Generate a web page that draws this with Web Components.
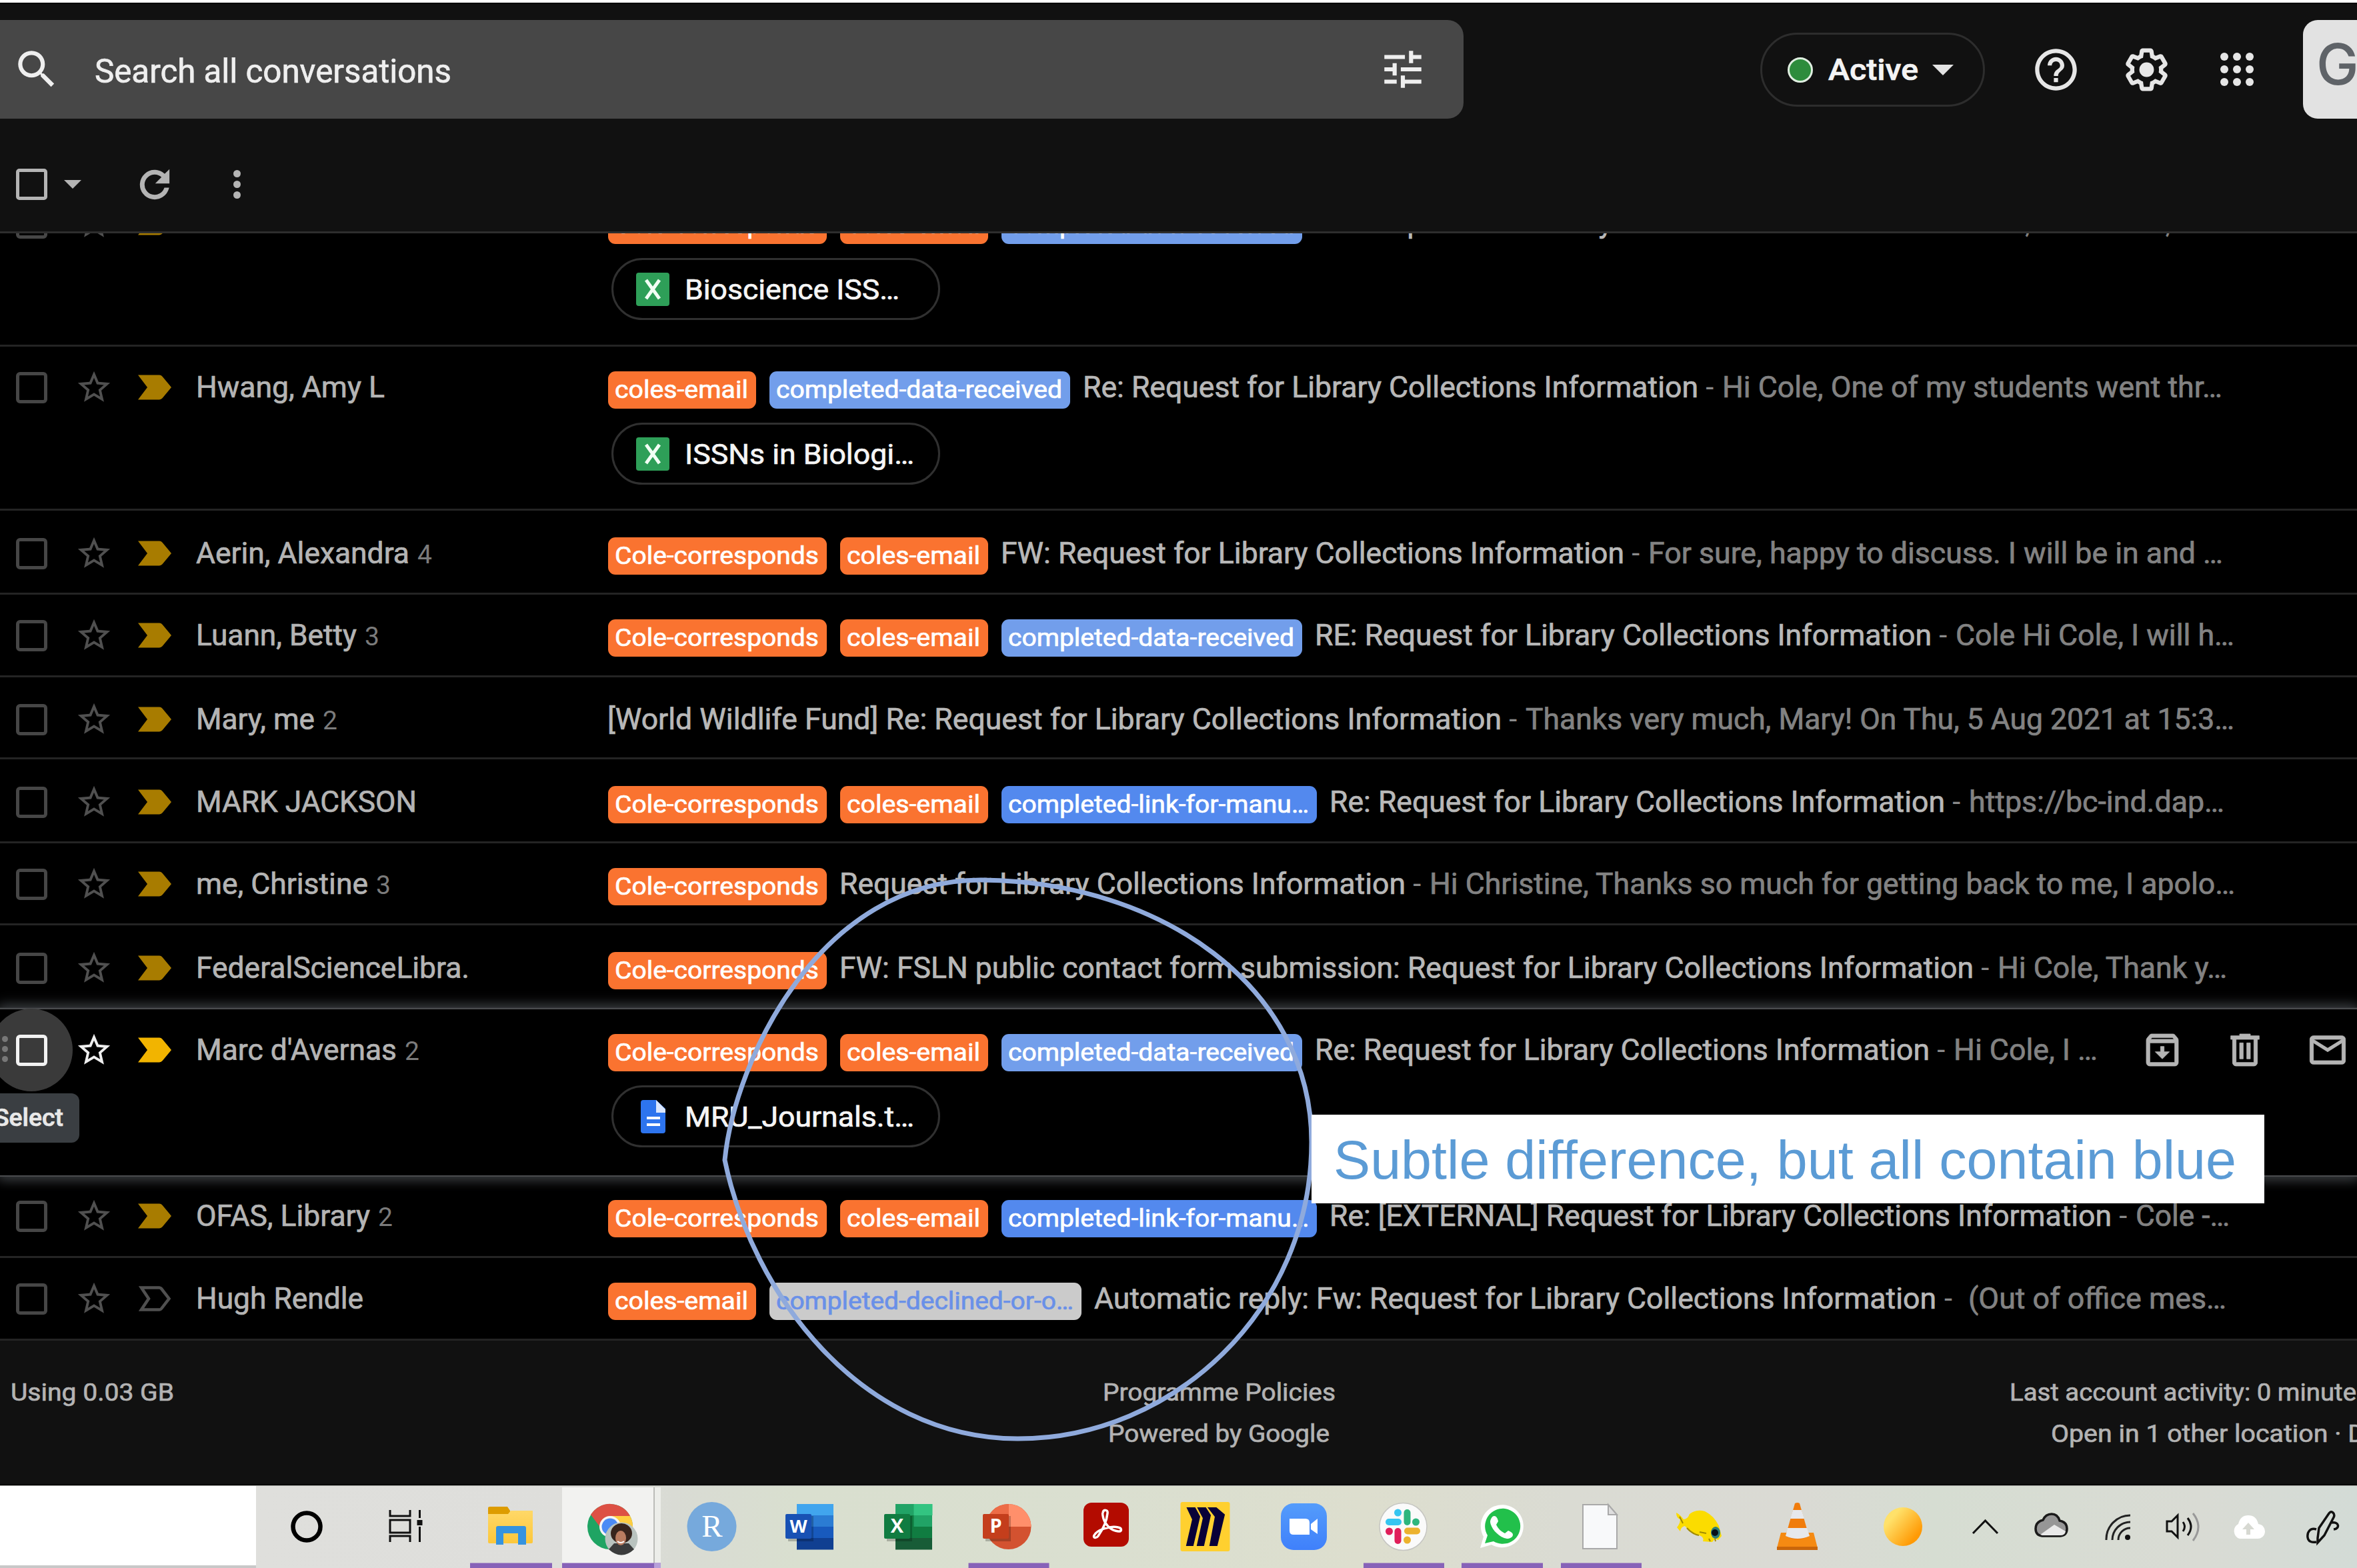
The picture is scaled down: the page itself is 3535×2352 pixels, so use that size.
<!DOCTYPE html>
<html lang="en">
<head>
<meta charset="utf-8">
<title>Mail</title>
<style>
html,body{margin:0;padding:0;background:#111;overflow:hidden}
body{width:3535px;height:2352px;font-family:Roboto,"Liberation Sans",sans-serif}
</style>
</head>
<body>
<mail-app></mail-app>
<script>
const define=(name,cls)=>customElements.define(name,cls);
const root=(el,html)=>{const r=el.shadowRoot||el.attachShadow({mode:'open'});r.innerHTML=html;return r;};

/* One line of text, stretched so that it fills the width given in "w". */
define('fit-text',class extends HTMLElement{
  connectedCallback(){
    const w=+this.getAttribute('w');
    const r=root(this,`<style>:host{display:inline-block;white-space:pre;flex:none;text-align:left}span{display:inline-block;transform-origin:0 50%;-webkit-text-stroke:var(--ink,.7px) currentColor}</style><span><slot></slot></span>`);
    if(!w)return;
    const s=r.querySelector('span');
    const nat=s.getBoundingClientRect().width;
    if(nat)s.style.transform=`translateX(2px) scaleX(${(w-3)/nat})`;
    this.style.width=w+'px';
  }
});

const ICON={
 search:`<path d="M15.5 14h-.79l-.28-.27A6.471 6.471 0 0 0 16 9.5 6.5 6.5 0 1 0 9.5 16c1.61 0 3.09-.59 4.23-1.57l.27.28v.79l5 4.99L20.49 19l-4.99-5zm-6 0C7.01 14 5 11.99 5 9.5S7.01 5 9.5 5 14 7.01 14 9.5 11.99 14 9.5 14z"/>`,
 tune:`<path d="M3 17v2h6v-2H3zM3 5v2h10V5H3zm10 16v-2h8v-2h-8v-2h-2v6h2zM7 9v2H3v2h4v2h2V9H7zm14 4v-2H11v2h10zm-6-4h2V7h4V5h-4V3h-2v6z"/>`,
 help:`<path d="M11 18h2v-2h-2v2zm1-16C6.48 2 2 6.48 2 12s4.480 10 10 10 10-4.480 10-10S17.520 2 12 2zm0 18c-4.410 0-8-3.590-8-8s3.590-8 8-8 8 3.590 8 8-3.590 8-8 8zm0-14c-2.210 0-4 1.790-4 4h2c0-1.100.9-2 2-2s2 .9 2 2c0 2-3 1.750-3 5h2c0-2.250 3-2.500 3-5 0-2.210-1.790-4-4-4z"/>`,
 gear:`<path d="M13.850 22.250h-3.700c-.740 0-1.360-.540-1.450-1.270l-.270-1.890c-.270-.140-.530-.290-.790-.460l-1.800.720c-.7.260-1.470-.030-1.810-.650L2.200 15.530c-.350-.660-.2-1.440.360-1.880l1.530-1.190c-.010-.150-.020-.3-.020-.460 0-.150.010-.310.020-.460l-1.520-1.190c-.590-.450-.740-1.260-.370-1.880l1.850-3.190c.340-.620 1.110-.9 1.790-.630l1.810.730c.260-.170.520-.320.780-.460l.270-1.910c.090-.7.710-1.250 1.440-1.250h3.700c.740 0 1.360.540 1.450 1.270l.270 1.890c.270.140.530.290.790.460l1.800-.720c.710-.260 1.480.030 1.820.650l1.840 3.180c.360.660.2 1.440-.360 1.880l-1.520 1.190c.010.150.020.3.020.460s-.010.310-.020.460l1.520 1.190c.560.450.720 1.230.370 1.860l-1.860 3.220c-.340.620-1.110.9-1.800.630l-1.800-.720c-.260.170-.520.320-.780.460l-.270 1.910c-.1.680-.720 1.220-1.460 1.220zm-3.230-2h2.760l.370-2.550.530-.220c.440-.180.880-.440 1.340-.780l.450-.340 2.380.960 1.380-2.400-2.030-1.580.070-.560c.030-.260.060-.510.060-.780s-.030-.530-.060-.780l-.070-.560 2.030-1.580-1.390-2.400-2.390.960-.450-.350c-.420-.320-.870-.580-1.330-.770l-.520-.220-.370-2.550h-2.760l-.370 2.550-.530.210c-.440.190-.880.440-1.340.79l-.450.330-2.380-.950-1.390 2.390 2.030 1.580-.070.560c-.03.260-.06.530-.06.790s.02.530.06.780l.070.560-2.030 1.580 1.380 2.400 2.390-.960.450.350c.430.330.860.580 1.330.77l.53.22.38 2.550z"/><circle cx="12" cy="12" r="3.500"/>`,
 star:`<path d="M22 9.240l-7.190-.620L12 2 9.190 8.630 2 9.240l5.460 4.730L5.820 21 12 17.270 18.180 21l-1.630-7.030L22 9.240zM12 15.400l-3.760 2.270 1-4.280-3.320-2.880 4.380-.380L12 6.100l1.710 4.040 4.380.380-3.320 2.880 1 4.280L12 15.400z"/>`,
 refresh:`<path stroke="currentColor" stroke-width=".6" d="M17.650 6.350A7.958 7.958 0 0 0 12 4a8 8 0 1 0 7.730 10h-2.080A6 6 0 1 1 12 6c1.660 0 3.140.690 4.220 1.780L13 11h7V4l-2.350 2.350z"/>`,
 archive:`<path stroke="currentColor" stroke-width=".3" d="M20.540 5.230l-1.390-1.680C18.880 3.210 18.470 3 18 3H6c-.470 0-.880.210-1.160.550L3.460 5.230C3.170 5.570 3 6.020 3 6.500V19c0 1.100.9 2 2 2h14c1.100 0 2-.9 2-2V6.500c0-.480-.170-.930-.460-1.270zM6.240 5h11.520l.830 1H5.420l.820-1zM5 19V8h14v11H5zm8-9h-2v3H8l4 4 4-4h-3z"/>`,
 trash:`<path stroke="currentColor" stroke-width=".3" d="M15 4V3H9v1H4v2h1v13c0 1.100.9 2 2 2h10c1.100 0 2-.9 2-2V6h1V4h-5zm2 15H7V6h10v13zM9 8h2v9H9zm4 0h2v9h-2z"/>`,
 mail:`<path stroke="currentColor" stroke-width=".3" d="M22 6c0-1.100-.9-2-2-2H4c-1.100 0-2 .9-2 2v12c0 1.100.9 2 2 2h16c1.100 0 2-.9 2-2V6zm-2 12H4V8l8 5 8-5v10zm-8-7L4 6h16l-8 5z"/>`
};
define('ui-icon',class extends HTMLElement{
  connectedCallback(){
    const s=this.getAttribute('size');
    root(this,`<style>:host{display:block;flex:none;line-height:0}</style><svg width="${s}" height="${s}" viewBox="0 0 24 24" fill="currentColor">${ICON[this.getAttribute('name')]}</svg>`);
  }
});

define('search-box',class extends HTMLElement{
  connectedCallback(){
    root(this,`<style>
:host{display:flex;flex:none;align-items:center;box-sizing:border-box;width:2195px;height:148px;background:#474747;border-radius:0 24px 24px 0;padding-left:18px;color:#efefef}
.q{margin-left:48px;font-size:49.500px;margin-top:5px}
.t{margin-left:auto;margin-right:54px}
</style><ui-icon name="search" size="74"></ui-icon><fit-text class="q" w="538">Search all conversations</fit-text><ui-icon class="t" name="tune" size="74"></ui-icon>`);
  }
});

define('status-pill',class extends HTMLElement{
  connectedCallback(){
    root(this,`<style>
:host{display:flex;flex:none;align-items:center;box-sizing:border-box;width:337px;height:111px;border:3px solid #2d2d2d;border-radius:56px;padding-left:38px;color:#f4f4f4}
i{width:32px;height:32px;border:3px solid #dfeee0;border-radius:50%;background:#2d8c3c}
fit-text{font-size:44px;font-weight:500;margin-left:21px}
b{border:16px solid transparent;border-top-color:#e3e3e3;border-bottom:0;margin-left:20px}
</style><i></i><fit-text w="138">Active</fit-text><b></b>`);
  }
});

define('top-bar',class extends HTMLElement{
  connectedCallback(){
    root(this,`<style>
:host{display:block;height:178px;background:#111;overflow:hidden}
.edge{height:4px;background:#fff;border-bottom:2px solid #000}
.row{display:flex;align-items:center;height:148px;margin-top:24px;color:#e6e6e6}
status-pill{margin-left:445px;margin-top:1px}
.h{margin-left:69px}.g{margin-left:61px}
.apps{flex:none;margin-left:73px;display:grid;grid-template-columns:repeat(3,12px);gap:7px}
.apps i{width:12px;height:12px;border-radius:50%;background:#e6e6e6}
.org{margin-left:74px;width:81px;height:148px;flex:none;background:#e2e2e2;border-radius:22px 0 0 22px;box-sizing:border-box;padding-left:20px;font:500 85px/134px Inter,"Liberation Sans",sans-serif;color:#5f6368}
</style>
<div class="edge"></div>
<div class="row"><search-box></search-box><status-pill></status-pill>
<ui-icon class="h" name="help" size="75"></ui-icon><ui-icon class="g" name="gear" size="75"></ui-icon>
<div class="apps">${'<i></i>'.repeat(9)}</div><div class="org">G</div></div>`);
  }
});

define('tool-bar',class extends HTMLElement{
  connectedCallback(){
    root(this,`<style>
:host{display:flex;align-items:center;box-sizing:border-box;height:172px;padding:28px 0 0 24px;background:#111;border-bottom:3px solid #2e2e2e;color:#b4b4b4}
.box{box-sizing:border-box;width:47px;height:47px;border:5px solid #b4b4b4;border-radius:5px}
.c{border:13px solid transparent;border-top-color:#b4b4b4;border-bottom:0;margin-left:25px}
ui-icon{margin-left:78px}
.m{margin-left:86px;display:grid;gap:5px}.m i{width:11px;height:11px;border-radius:50%;background:#b4b4b4}
</style><div class="box"></div><div class="c"></div><ui-icon name="refresh" size="64"></ui-icon><div class="m"><i></i><i></i><i></i></div>`);
  }
});

const KINDS={
 cc:['Cole-corresponds',328,'#fa7330','#fff'],
 ce:['coles-email',222,'#fa7330','#fff'],
 cd:['completed-data-received',451,'#729eeb','#fff'],
 cl:['completed-link-for-manu…',473,'#5389ee','#fff'],
 co:['completed-declined-or-o…',468,'#cbcbcb','#6a90e8']
};
define('mail-label',class extends HTMLElement{
  connectedCallback(){
    const [t,w,bg,fg]=KINDS[this.getAttribute('kind')];
    root(this,`<style>:host{display:flex;flex:none;align-items:center;box-sizing:border-box;padding-left:7.500px;width:${w}px;height:56px;margin-top:8px;border-radius:11px;background:${bg};color:${fg};font-size:37px;line-height:56px}</style><fit-text w="${w-19}">${t}</fit-text>`);
  }
});

define('file-chip',class extends HTMLElement{
  connectedCallback(){
    const doc=this.getAttribute('type')==='doc';
    const icon=doc
      ?`<svg width="50" height="50" viewBox="0 0 50 50"><path d="M11 0h19l14 13v33a4 4 0 0 1-4 4H11a4 4 0 0 1-4-4V4a4 4 0 0 1 4-4z" fill="#2d74ee"/><path d="M30 0l14 14v5H30z" fill="#dbe7fd"/><path d="M16 25h20v4H16zM16 35h20v4H16z" fill="#fff"/></svg>`
      :`<svg width="50" height="50" viewBox="0 0 50 50"><rect width="50" height="50" rx="4" fill="#2e9f58"/><path d="M15 11l20 28M35 11L15 39" stroke="#f2fff5" stroke-width="5"/></svg>`;
    root(this,`<style>:host{display:flex;box-sizing:border-box;align-items:center;width:493px;height:93px;border:3px solid #303030;border-radius:47px;padding-left:34px;color:#f5f5f5;font-size:43px}svg{flex:none;margin-right:21px}</style>${icon}<fit-text w="${this.getAttribute('w')}">${this.getAttribute('name')}</fit-text>`);
  }
});

define('mail-row',class extends HTMLElement{
  connectedCallback(){
    const d=this.data,on=d.on;
    const tags=(d.tags||[]).map(k=>`<mail-label kind="${k}"></mail-label>`).join('');
    root(this,`<style>
:host{display:block;box-sizing:border-box;height:${d.h}px;background:#000;border-bottom:3px solid #242424;overflow:hidden;color:#b4b4b4;font-size:43.500px}
:host([on]){border:0;position:relative;z-index:1;overflow:visible;box-shadow:0 0 0 2px #4a4c4e,0 -4px 18px 3px #36393c,0 4px 18px 3px #36393c}
.line{display:flex;align-items:center;height:124px;margin-top:${d.d?d.d-1:-1}px}
.c1{position:relative;width:94px;height:124px;flex:none;display:grid;place-items:center}
.halo{position:absolute;left:-15px;top:0;width:124px;height:124px;border-radius:50%;background:#3a3a3a}
.grip{position:absolute;left:3px;top:41px;display:grid;gap:6px}.grip i{width:9px;height:9px;border-radius:50%;background:#777}
.box{position:relative;box-sizing:border-box;width:47px;height:47px;border:5px solid ${on?'#f2f2f2':'#464646'};border-radius:6px}
.c2{width:94px;flex:none;display:grid;place-items:center;color:${on?'#eee':'#505050'}}
.c3{width:104px;padding-left:19px;box-sizing:border-box;flex:none;line-height:0}
.from{width:${620+(d.tags?0:-3)}px;flex:none;display:flex;align-items:baseline}
.from small{font-size:39px;color:#7b7b7b;margin-left:11px}
.body{display:flex;align-items:center;gap:20px}
.txt{display:flex;margin-left:${d.tags?-3:0}px;color:#b8b8b8}
.dash{box-sizing:border-box;width:${d.gap||32.5}px;${d.gap?'padding-left:11px':'text-align:center'};color:#8a8a8a}
.snip{color:#828282}
.act{display:flex;color:#b5b5b5;gap:60px;position:absolute;left:3211px;top:29px}
.att{margin:-9px 0 0 917px}
.tip{position:absolute;left:-30px;top:126px;width:149px;height:74px;box-sizing:border-box;padding-left:19px;border-radius:0 12px 12px 0;background:#3a3e42;color:#e8e8e8;font:500 37px/74px Roboto,sans-serif}
</style>
<div class="line">
<div class="c1">${on?'<div class="halo"></div><div class="grip"><i></i><i></i><i></i></div>':''}<div class="box"></div></div>
<div class="c2"><ui-icon name="star" size="58"></ui-icon></div>
<div class="c3"><svg width="52" height="38" viewBox="0 0 52 38">${d.hollow
 ?'<path d="M5 2.500h27a4 4 0 0 1 3 1.500l11.500 15L35 34a4 4 0 0 1-3 1.500H5L16 19z" fill="none" stroke="#505050" stroke-width="4.500"/>'
 :`<path d="M0 0.500h32a6 6 0 0 1 4.500 2.200L50 19 36.500 35.300a6 6 0 0 1-4.500 2.200H0L14 19z" fill="${on?'#f2b400':'#a87c00'}"/>`}</svg></div>
<div class="from">${d.from?`<fit-text w="${d.fw}">${d.from}</fit-text>`:''}${d.n?`<small>${d.n}</small>`:''}</div>
<div class="body">${tags}<div class="txt"><fit-text w="${d.sw}">${d.subj}</fit-text><span class="dash">-</span><fit-text class="snip" w="${d.nw}">${d.snip}</fit-text></div></div>
</div>
${d.file?`<div class="att"><file-chip type="${d.ft}" w="${d.filew}" name="${d.file}"></file-chip></div>`:''}
${on?'<div class="act"><ui-icon name="archive" size="64"></ui-icon><ui-icon name="trash" size="64"></ui-icon><ui-icon name="mail" size="64"></ui-icon></div><div class="tip"><fit-text w="107">Select</fit-text></div>':''}`);
    if(on)this.setAttribute('on','');
  }
});

const R='Request for Library Collections Information';
const ROWS=[
 {h:249,d:2,tags:['cc','ce','cd'],from:'',subj:'Re: '+R,sw:923,snip:'Hi Cole, I am out now,',nw:330,file:'Bioscience ISS…',filew:325,ft:'x'},
 {h:246,from:'Hwang, Amy L',fw:286,tags:['ce','cd'],subj:'Re: '+R,sw:926,snip:'Hi Cole, One of my students went thr…',nw:753,file:'ISSNs in Biologi…',filew:347,ft:'x'},
 {h:126,d:3,from:'Aerin, Alexandra',fw:323,n:4,tags:['cc','ce'],subj:'FW: '+R,sw:938,snip:'For sure, happy to discuss. I will be in and …',nw:865},
 {h:124,from:'Luann, Betty',fw:244,n:3,tags:['cc','ce','cd'],subj:'RE: '+R,sw:928,snip:'Cole Hi Cole, I will h…',nw:421},
 {h:123,d:2,from:'Mary, me',fw:181,n:2,subj:'[World Wildlife Fund] Re: '+R,sw:1344,snip:'Thanks very much, Mary! On Thu, 5 Aug 2021 at 15:3…',nw:1066},
 {h:126,d:3,from:'MARK JACKSON',fw:334,tags:['cc','ce','cl'],subj:'Re: '+R,sw:926,snip:'https://bc-ind.dap…',nw:386},
 {h:123,from:'me, Christine',fw:261,n:3,tags:['cc'],subj:R,sw:852,snip:'Hi Christine, Thanks so much for getting back to me, I apolo…',nw:1211},
 {h:126,d:3,from:'FederalScienceLibra.',fw:413,tags:['cc'],subj:'FW: FSLN public contact form submission: '+R,sw:1704,snip:'Hi Cole, Thank y…',nw:347},
 {h:249,on:1,from:"Marc d'Avernas",fw:304,n:2,tags:['cc','ce','cd'],subj:'Re: '+R,sw:925,snip:'Hi Cole, I …',nw:219,file:'MRU_Journals.t…',filew:347,ft:'doc'},
 {h:124,from:'OFAS, Library',fw:264,n:2,tags:['cc','ce','cl'],subj:'Re: [EXTERNAL] '+R,sw:1176,snip:'Cole -…',nw:144},
 {h:124,hollow:1,from:'Hugh Rendle',fw:254,tags:['ce','co'],subj:'Automatic reply: Fw: '+R,sw:1266,gap:45,snip:'(Out of office mes…',nw:390}
];
define('mail-list',class extends HTMLElement{
  connectedCallback(){
    const r=root(this,`<style>:host{display:flex;flex-direction:column;height:1661px;overflow:hidden;background:#000}mail-row{flex:none}mail-row:first-of-type{margin-top:-79px}</style>`);
    ROWS.forEach(d=>{const e=document.createElement('mail-row');e.data=d;r.append(e);});
  }
});

define('mail-footer',class extends HTMLElement{
  connectedCallback(){
    root(this,`<style>
:host{display:grid;grid-template-columns:1200px 1255px 1080px;box-sizing:border-box;height:217px;padding-top:47px;background:#111;color:#b3b3b3;font-size:37px;line-height:62px;border-bottom:2px solid #000;overflow:hidden}
.a{padding-left:14px}.b fit-text{display:block;margin:0 auto}.c{white-space:nowrap}.c div{padding-left:557px}.c div+div{padding-left:619px}
</style><div class="a"><fit-text w="248">Using 0.03 GB</fit-text></div>
<div class="b"><fit-text w="352">Programme Policies</fit-text><fit-text w="335">Powered by Google</fit-text></div>
<div class="c"><div><fit-text w="523">Last account activity: 0 minute</fit-text></div><div><fit-text w="474">Open in 1 other location · D</fit-text></div></div>`);
  }
});

/* Each taskbar cell: left edge, width, active line, drawing in screen coordinates. */
const office=(x,l,b,body)=>`${body}<rect x="${x+4}" y="2274" width="38" height="38" fill="#000" opacity=".22"/><rect x="${x}" y="2271" width="39" height="37" rx="2" fill="${b}"/><text x="${x+19.5}" y="2299" text-anchor="middle" font-family="Open Sans" font-weight="700" font-size="${l==='W'?27:29}" fill="#fff">${l}</text>`;
const bars=(x,c)=>c.map((k,i)=>`<rect x="${x+17}" y="${2256+i*17}" width="55" height="17.500" fill="${k}"/>`).join('');
const CELLS=[
 [384,150,0,`<circle cx="460" cy="2290" r="20.500" fill="none" stroke="#000" stroke-width="6.500"/>`],
 [534,156,0,`<g fill="none" stroke="#111" stroke-width="3"><path d="M585 2265v9h30v-9M585 2280h30v19H585zM585 2313v-9h30v9M629.500 2265v12M629.500 2290v23"/></g><rect x="625.500" y="2280" width="8" height="8" fill="#111"/>`],
 [690,153,[705,123],`<path d="M732 2262q0-2 3-2h26l4 6v5h-33z" fill="#dd9c00"/><path d="M732 2271h30l4-5h33v47q0 2-2 2h-63q-2 0-2-2z" fill="url(#fold)"/><path d="M744 2317v-25q0-3 3-3h39q3 0 3 3v25h-12v-17h-22v17z" fill="#3593df"/>`],
 [843,148,[843,148],`<rect x="843" y="2231" width="137" height="121" fill="#f2f2f0"/><rect x="980" y="2231" width="2" height="121" fill="#bbbcb8"/><rect x="982" y="2231" width="9" height="121" fill="#ecede9"/>
 <circle cx="915" cy="2290" r="34" fill="#1fa463"/><path d="M886 2272A34 34 0 0 1 945 2274H915l-14 18z" fill="#dd5044"/><path d="M915 2274h30a34 34 0 0 1-27 50l14-26z" fill="#ffcd40"/><circle cx="915" cy="2290" r="16" fill="#f5f5f5"/><circle cx="915" cy="2290" r="12.500" fill="#4c8bf5"/>
 <circle cx="932" cy="2308" r="24.500" fill="#b9c3bf"/><path d="M913 2324q19 17 38 0l-8-9h-22z" fill="#3b3c3c"/><ellipse cx="932" cy="2300" rx="16" ry="15" fill="#38251d"/><ellipse cx="931" cy="2307" rx="8" ry="11" fill="#b97c60"/><path d="M926 2312q5 4 10 0" stroke="#fff" stroke-width="2" fill="none"/>`],
 [991,150,0,`<circle cx="1067.500" cy="2290" r="37" fill="#76a9dc"/><text x="1068" y="2305" text-anchor="middle" font-family="Liberation Serif" font-size="47" fill="#fff">R</text>`],
 [1141,148,0,office(1178,'W','#1851b4',bars(1178,['#41a5ee','#2b7cd3','#185abd','#103f91']))],
 [1289,148,0,office(1326,'X','#107c41',bars(1326,['#21a366','#21a366','#107c41','#185c37'])+`<path d="M1370.500 2256h28v17h-28z" fill="#33c481"/><path d="M1343 2273h27.500v17H1343z" fill="#107c41"/>`)],
 [1437,148,[1452.500,121],office(1474,'P','#c43e1c',`<circle cx="1512.500" cy="2290" r="34" fill="#d35230"/><path d="M1512.500 2290V2256a34 34 0 0 1 34 34z" fill="#ff8f6b"/><path d="M1512.500 2290V2256a34 34 0 0 0-34 34z" fill="#ed6c47"/>`)],
 [1585,148,0,`<rect x="1625" y="2254" width="68" height="66" rx="12" fill="#b30b00"/><path d="M1654 2269c1-5 8-5 7 1-1 11-7 24-14 34-3 4-8 3-6-1 4-8 24-15 36-12 6 1 6 7 0 6-10-1-19-9-22-19-1-4-2-7-1-9z" fill="none" stroke="#fff" stroke-width="3.500"/>`],
 [1733,148,0,`<rect x="1770.500" y="2253" width="74" height="74" rx="3" fill="#ffd02f"/><path d="M1781 2262h11l7 13-10 43h-9l9-39zM1797 2262h11l7 11-10 45h-9l9-41zM1813 2262h11l12 10-11 46h-10l8-43z" fill="#080138" stroke="#080138" stroke-width="2"/>`],
 [1881,148,0,`<rect x="1921" y="2255" width="69" height="70" rx="19" fill="url(#zm)"/><path d="M1934 2278h24q6 0 6 6v18h-24q-6 0-6-6zM1966 2286l10-8v23l-10-7z" fill="#fff"/>`],
 [2029,148,[2045,121],`<circle cx="2104.500" cy="2290" r="35.500" fill="#fafafa" stroke="#c6c6c2" stroke-width="1.500"/><g stroke-width="10" stroke-linecap="round"><path d="M2083 2283h14" stroke="#36c5f0"/><path d="M2110.500 2269v14" stroke="#2eb67d"/><path d="M2111 2296.500h14" stroke="#ecb22e"/><path d="M2096.500 2297v14" stroke="#e01e5a"/></g><circle cx="2096.500" cy="2269" r="5.500" fill="#36c5f0"/><circle cx="2123.500" cy="2283" r="5.500" fill="#2eb67d"/><circle cx="2110.500" cy="2310" r="5.500" fill="#ecb22e"/><circle cx="2083.500" cy="2297" r="5.500" fill="#e01e5a"/>`],
 [2177,148,[2192,122],`<path d="M2220 2322l5-17a32 32 0 1 1 12 12z" fill="#fff"/><path d="M2227 2315l4-12a26.500 26.500 0 1 1 9 9z" fill="#22c04b"/><path d="M2241 2274c3 0 5 3 6 8l-3 5c3 6 7 10 13 13l5-4c5 2 7 4 7 6 0 4-5 6-9 6-12-2-24-15-25-25 0-4 3-9 6-9z" fill="#fff"/>`],
 [2325,148,[2341,121],`<path d="M2374 2257h38l13 15v51h-51z" fill="#f8f9fa" stroke="#a9a9a9" stroke-width="2"/><path d="M2412 2257v15h13z" fill="#dedede" stroke="#a9a9a9" stroke-width="2"/>`],
 [2473,148,0,`<path d="M2514 2269q6 3 11 10 6 0 9-8 10-8 23-4 14 7 21 22l4 15-5 6-5-2-4 5-14-1q2-5-3-8-16-5-24-15-6 1-7 8l-5-6q5-6 5-12-6-2-6-10z" fill="#fbdc00"/><path d="M2530 2292q8 9 18 11M2519 2275l5 10M2549 2298l10 2" stroke="#a18b00" stroke-width="2" fill="none"/><path d="M2563 2308l2 4M2572 2308l1 4" stroke="#a18b00" stroke-width="2"/><ellipse cx="2573" cy="2299" rx="7" ry="9" fill="#2c7d78"/><circle cx="2572" cy="2299" r="5" fill="#051018"/>`],
 [2621,148,0,`<path d="M2671 2299h49l6 23q0 3-3 3h-55q-3 0-3-3z" fill="#f58a12"/><path d="M2665 2320h61v5h-61z" fill="#c9660a"/><path d="M2692 2255q4-2 7 0l14 49q-17 11-35 0z" fill="#f07c0c"/><path d="M2689 2265h13l4 13h-21zM2681 2292h29l4 12q-18 8-36 0z" fill="#e6e8ec"/>`],
 [2769,158,0,`<circle cx="2854" cy="2290" r="29" fill="url(#sun)"/>`],
 [2927,96,0,`<path d="M2959 2300l18.500-19 18.500 19" fill="none" stroke="#111" stroke-width="3"/>`],
 [3023,104,0,`<path d="M3063 2304q-10-1-10-11t11-13q4-9 13-9t12 10q11 2 11 12t-10 11z" fill="#969696" stroke="#1a1a1a" stroke-width="3.500"/><path d="M3060 2302l21-15 17 10q-1 6-8 6h-27z" fill="#e9e9e9"/>`],
 [3127,94,0,`<g fill="none" stroke="#222" stroke-width="3"><path d="M3159 2310a36 36 0 0 1 36-37"/><path d="M3168 2310a27 27 0 0 1 27-27"/><path d="M3177 2310a18 18 0 0 1 18-18"/></g><circle cx="3191" cy="2306" r="4" fill="#111"/>`],
 [3221,100,0,`<g fill="none" stroke="#111" stroke-width="3"><path d="M3250 2282h7l9-9v33l-9-9h-7z"/><path d="M3274 2283q5 7 0 14M3281 2277q10 13 0 26"/><path d="M3289 2270q16 20 0 41" stroke="#999"/></g>`],
 [3321,104,0,`<path d="M3359 2308a12 12 0 0 1-2-22q3-13 15-13t15 13a11 11 0 0 1-2 22z" fill="#fff"/><path d="M3372 2284l9 10h-6v8h-6v-8h-6z" fill="#d7d9d2"/>`],
 [3425,110,0,`<g fill="none" stroke="#111" stroke-width="3.500"><path d="M3476 2307l2-15 15-22q3-4 6-1t1 7l-14 27-10 11z"/><path d="M3474 2294c-9-3-14 4-13 12 1 7 7 8 13 7M3497 2284c11-2 13 9 3 10"/></g>`]
];
define('task-cell',class extends HTMLElement{
  connectedCallback(){
    const [x,w,u,g]=this.data;
    root(this,`<style>:host{display:block;flex:none;width:${w}px;height:123px;line-height:0}</style><svg width="${w}" height="123" viewBox="${x} 2229 ${w} 123"><defs><linearGradient id="fold" x1="0" y1="0" x2="0" y2="1"><stop offset="0" stop-color="#ffd868"/><stop offset="1" stop-color="#fcc73a"/></linearGradient><linearGradient id="zm" x1="0" y1="0" x2="0" y2="1"><stop offset="0" stop-color="#549cfb"/><stop offset="1" stop-color="#3f80fb"/></linearGradient><linearGradient id="sun" x1=".1" y1=".2" x2=".8" y2=".8"><stop offset=".15" stop-color="#ffe16a"/><stop offset="1" stop-color="#ff9a05"/></linearGradient></defs>${g}${u?`<rect x="${u[0]}" y="2344.500" width="${u[1]}" height="8" fill="#8762b8"/>`:''}${x===843?'<rect x="981" y="2344.500" width="10" height="8" fill="#b7a0da"/>':''}</svg>`);
  }
});
define('task-bar',class extends HTMLElement{
  connectedCallback(){
    const r=root(this,`<style>:host{display:flex;height:124px;box-sizing:border-box;border-top:1px solid #a5a6a2;background:linear-gradient(90deg,#dfdfdc 384px,#dededb 850px,#d9dbd4 1010px,#d9dfcf 1200px,#dadfd0 1650px,#dddece 2050px,#dadbd3 2350px,#dadad4 2700px,#d6ddd2 2900px,#d9dbd4 3300px,#d3dbd6 3535px)}.find{width:384px;height:119px;flex:none;background:#fff;border-bottom:4px solid #c8c8c8;box-sizing:content-box}</style><div class="find"></div>`);
    CELLS.forEach(d=>{const e=document.createElement('task-cell');e.data=d;r.append(e);});
  }
});

/* Hand-drawn ring: four curves that begin and end in the same corner. */
define('note-ring',class extends HTMLElement{
  connectedCallback(){
    root(this,`<style>:host{display:block;position:absolute;left:0;top:0;z-index:5;line-height:0;pointer-events:none}</style><svg width="3535" height="2228" viewBox="0 0 3535 2228"><path d="M1087 1740C1102 1590 1230 1318 1473 1320C1740 1322 1967 1480 1967 1713C1967 1965 1760 2158 1527 2158C1290 2158 1128 1940 1087 1740z" fill="none" stroke="#8faadc" stroke-width="7"/></svg>`);
  }
});
define('note-box',class extends HTMLElement{
  connectedCallback(){
    root(this,`<style>:host{display:block;position:absolute;left:1967px;top:1672px;width:1429px;height:133px;z-index:6;box-sizing:border-box;padding-left:31px;background:#fff;color:#5b9bd5;font:82px/136px "Liberation Sans",Arial,sans-serif;--ink:0px}</style><fit-text w="1357">Subtle difference, but all contain blue</fit-text>`);
  }
});

define('mail-app',class extends HTMLElement{
  connectedCallback(){
    root(this,`<style>:host{display:flex;flex-direction:column;position:relative;width:3535px;height:2352px;overflow:hidden;background:#111}mail-list,top-bar,tool-bar,mail-footer,task-bar{flex:none}</style><top-bar></top-bar><tool-bar></tool-bar><mail-list></mail-list><mail-footer></mail-footer><task-bar></task-bar><note-ring></note-ring><note-box></note-box>`);
  }
});
</script>
</body>
</html>
